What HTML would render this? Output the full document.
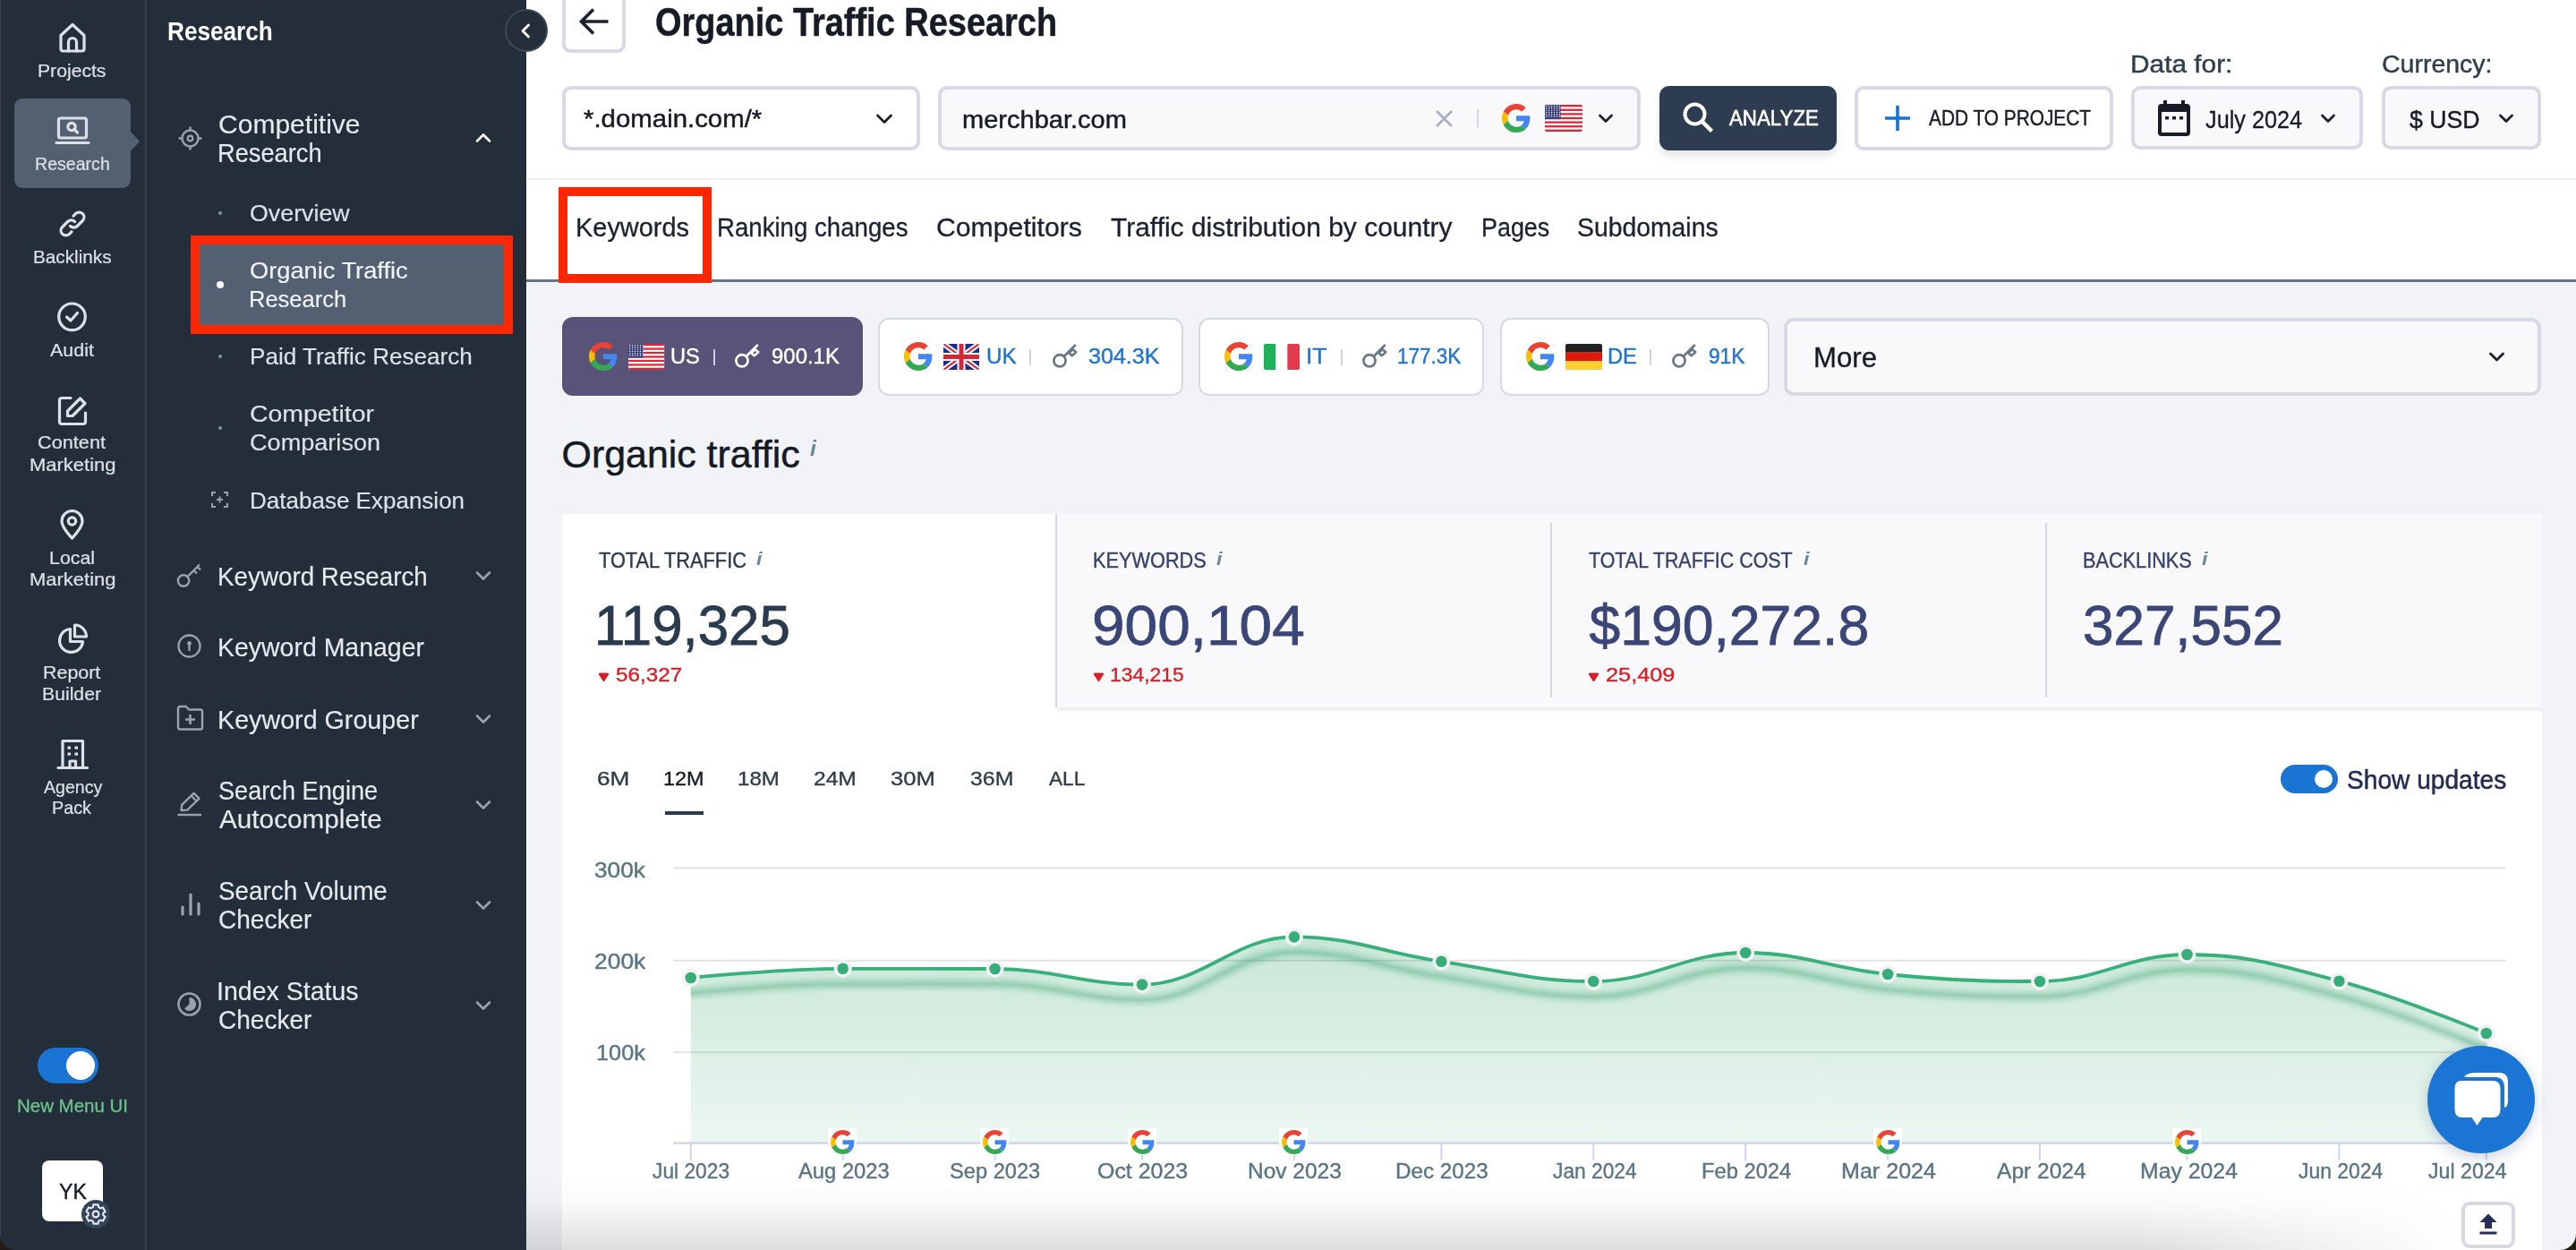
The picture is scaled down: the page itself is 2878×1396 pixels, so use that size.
<!DOCTYPE html><html><head><meta charset="utf-8"><title>Organic Traffic Research</title><style>*{margin:0;padding:0;box-sizing:content-box}
html,body{width:2878px;height:1396px;overflow:hidden;background:#242e3b}
body{position:relative;font-family:"Liberation Sans",sans-serif}
.t{position:absolute;white-space:nowrap;line-height:1;transform-origin:0 0}
svg{position:absolute}</style></head><body>
<div style="position:absolute;left:0px;top:0px;width:588px;height:1396px;background:#242e3b;"></div>
<div style="position:absolute;left:162px;top:0px;width:2px;height:1396px;background:#364251;"></div>
<div style="position:absolute;left:0px;top:0px;width:1px;height:1396px;background:#3a4553;"></div>
<div style="position:absolute;left:16px;top:110px;width:130px;height:100px;background:#526072;border-radius:9px;"></div>
<svg style="position:absolute;left:145px;top:146px;overflow:visible;" width="12" height="24" viewBox="0 0 12 24"><path d="M0 0 L11 12 L0 24 Z" fill="#526072"/></svg>
<div class="t" style="left:42.31px;top:68.52px;font-size:20.64px;color:#dde0e6;transform:scaleX(1.0259);-webkit-text-stroke:0.20px #dde0e6;">Projects</div>
<div class="t" style="left:38.93px;top:172.52px;font-size:20.64px;color:#dde0e6;transform:scaleX(0.9491);-webkit-text-stroke:0.20px #dde0e6;">Research</div>
<div class="t" style="left:36.74px;top:276.52px;font-size:20.64px;color:#dde0e6;transform:scaleX(1.0056);-webkit-text-stroke:0.20px #dde0e6;">Backlinks</div>
<div class="t" style="left:56.30px;top:380.52px;font-size:20.64px;color:#dde0e6;transform:scaleX(1.0394);-webkit-text-stroke:0.20px #dde0e6;">Audit</div>
<div class="t" style="left:42.41px;top:484.22px;font-size:20.64px;color:#dde0e6;transform:scaleX(1.0520);-webkit-text-stroke:0.20px #dde0e6;">Content</div>
<div class="t" style="left:32.84px;top:508.52px;font-size:20.64px;color:#dde0e6;transform:scaleX(1.0660);-webkit-text-stroke:0.20px #dde0e6;">Marketing</div>
<div class="t" style="left:55.29px;top:612.52px;font-size:20.64px;color:#dde0e6;transform:scaleX(1.0359);-webkit-text-stroke:0.20px #dde0e6;">Local</div>
<div class="t" style="left:32.54px;top:636.52px;font-size:20.64px;color:#dde0e6;transform:scaleX(1.0660);-webkit-text-stroke:0.20px #dde0e6;">Marketing</div>
<div class="t" style="left:48.28px;top:740.52px;font-size:20.64px;color:#dde0e6;transform:scaleX(1.0388);-webkit-text-stroke:0.20px #dde0e6;">Report</div>
<div class="t" style="left:47.30px;top:764.52px;font-size:20.64px;color:#dde0e6;transform:scaleX(1.0285);-webkit-text-stroke:0.20px #dde0e6;">Builder</div>
<div class="t" style="left:48.60px;top:869.02px;font-size:20.64px;color:#dde0e6;transform:scaleX(0.9501);-webkit-text-stroke:0.20px #dde0e6;">Agency</div>
<div class="t" style="left:58.42px;top:891.52px;font-size:20.64px;color:#dde0e6;transform:scaleX(0.9577);-webkit-text-stroke:0.20px #dde0e6;">Pack</div>
<svg style="position:absolute;left:66px;top:25px;overflow:visible;" width="30" height="34" viewBox="0 0 30 34"><path d="M2 14.5 L15 2.5 L28 14.5 V29.5 a2.5 2.5 0 0 1 -2.5 2.5 H4.5 a2.5 2.5 0 0 1 -2.5 -2.5 Z" fill="none" stroke="#dde0e6" stroke-width="3.2" stroke-linecap="round" stroke-linejoin="round"/><path d="M10.5 32 V22 a4.5 4.5 0 0 1 9 0 V32" fill="none" stroke="#dde0e6" stroke-width="3.2" stroke-linecap="round" stroke-linejoin="round"/></svg>
<svg style="position:absolute;left:62px;top:130px;overflow:visible;" width="38" height="32" viewBox="0 0 38 32"><rect x="3.5" y="2" width="31" height="22" rx="2" fill="none" stroke="#dde0e6" stroke-width="3.2" stroke-linecap="round" stroke-linejoin="round"/><circle cx="18" cy="11.5" r="4.2" fill="none" stroke="#dde0e6" stroke-width="3.2" stroke-linecap="round" stroke-linejoin="round" stroke-width="2.6"/><path d="M21 14.5 L24.5 18" fill="none" stroke="#dde0e6" stroke-width="3.2" stroke-linecap="round" stroke-linejoin="round" stroke-width="2.6"/><path d="M1 29.5 H37" fill="none" stroke="#dde0e6" stroke-width="3.2" stroke-linecap="round" stroke-linejoin="round" stroke-linecap="butt"/></svg>
<svg style="position:absolute;left:64px;top:233px;overflow:visible;" width="34" height="34" viewBox="0 0 34 34"><path d="M14.5 19.5 a5.5 5.5 0 0 0 7.8 0 l6 -6 a5.5 5.5 0 0 0 -7.8 -7.8 l-2.5 2.5" fill="none" stroke="#dde0e6" stroke-width="3.2" stroke-linecap="round" stroke-linejoin="round"/><path d="M19.5 14.5 a5.5 5.5 0 0 0 -7.8 0 l-6 6 a5.5 5.5 0 0 0 7.8 7.8 l2.5 -2.5" fill="none" stroke="#dde0e6" stroke-width="3.2" stroke-linecap="round" stroke-linejoin="round"/></svg>
<svg style="position:absolute;left:64px;top:337px;overflow:visible;" width="34" height="34" viewBox="0 0 34 34"><circle cx="16.5" cy="16.8" r="14.8" fill="none" stroke="#dde0e6" stroke-width="3.2" stroke-linecap="round" stroke-linejoin="round"/><path d="M10.5 17 L15 21 L22.5 12.5" fill="none" stroke="#dde0e6" stroke-width="3.2" stroke-linecap="round" stroke-linejoin="round"/></svg>
<svg style="position:absolute;left:64px;top:441px;overflow:visible;" width="34" height="35" viewBox="0 0 34 35"><path d="M15 3.5 H5 a2.5 2.5 0 0 0 -2.5 2.5 V30 a2.5 2.5 0 0 0 2.5 2.5 H29 a2.5 2.5 0 0 0 2.5 -2.5 V20" fill="none" stroke="#dde0e6" stroke-width="3.2" stroke-linecap="round" stroke-linejoin="round"/><path d="M25.5 4 L31 9.5 L17 23.5 H11.5 V18 Z" fill="none" stroke="#dde0e6" stroke-width="3.2" stroke-linecap="round" stroke-linejoin="round"/></svg>
<svg style="position:absolute;left:67px;top:569px;overflow:visible;" width="28" height="34" viewBox="0 0 28 34"><path d="M13.5 32 C13.5 32 2 20.5 2 13 a11.5 11.5 0 0 1 23 0 C25 20.5 13.5 32 13.5 32 Z" fill="none" stroke="#dde0e6" stroke-width="3.2" stroke-linecap="round" stroke-linejoin="round"/><circle cx="13.5" cy="13" r="4.2" fill="none" stroke="#dde0e6" stroke-width="3.2" stroke-linecap="round" stroke-linejoin="round"/></svg>
<svg style="position:absolute;left:64px;top:696px;overflow:visible;" width="35" height="36" viewBox="0 0 35 36"><path d="M14.5 6.5 a13 13 0 1 0 14 14 H14.5 Z" fill="none" stroke="#dde0e6" stroke-width="3.2" stroke-linecap="round" stroke-linejoin="round"/><path d="M19.5 2 a13 13 0 0 1 13 13 H19.5 Z" fill="none" stroke="#dde0e6" stroke-width="3.2" stroke-linecap="round" stroke-linejoin="round"/></svg>
<svg style="position:absolute;left:64px;top:825px;overflow:visible;" width="35" height="35" viewBox="0 0 35 35"><path d="M6 32.5 V2.5 H28.5 V32.5" fill="none" stroke="#dde0e6" stroke-width="3.2" stroke-linecap="round" stroke-linejoin="round"/><path d="M1 32.5 H33.5" fill="none" stroke="#dde0e6" stroke-width="3.2" stroke-linecap="round" stroke-linejoin="round"/><path d="M14 32.5 V25 H20.5 V32.5" fill="none" stroke="#dde0e6" stroke-width="3.2" stroke-linecap="round" stroke-linejoin="round"/><g fill="#dde0e6"><rect x="11.5" y="8.5" width="3.5" height="3.2"/><rect x="19.5" y="8.5" width="3.5" height="3.2"/><rect x="11.5" y="15.5" width="3.5" height="3.2"/><rect x="19.5" y="15.5" width="3.5" height="3.2"/></g></svg>
<div style="position:absolute;left:42px;top:1170px;width:68px;height:40px;background:#1a74d4;border-radius:20px;"></div>
<div style="position:absolute;left:74px;top:1174px;width:32px;height:32px;background:#fff;border-radius:50%;"></div>
<div class="t" style="left:19.36px;top:1224.77px;font-size:20.35px;color:#6cc28e;transform:scaleX(1.0054);-webkit-text-stroke:0.33px #6cc28e;">New Menu UI</div>
<div style="position:absolute;left:47px;top:1296px;width:68px;height:68px;background:#fff;border-radius:8px;"></div>
<div class="t" style="left:65.92px;top:1318.68px;font-size:24.71px;color:#171b26;transform:scaleX(0.9375);-webkit-text-stroke:0.40px #171b26;">YK</div>
<div style="position:absolute;left:91px;top:1340px;width:32px;height:32px;background:#33445a;border-radius:50%;"></div>
<svg style="position:absolute;left:94px;top:1343px;overflow:visible;" width="26" height="26" viewBox="0 0 26 26"><path d="M16.15 5.21 L15.66 2.33 L10.34 2.33 L9.85 5.21 L7.83 6.38 L5.09 5.36 L2.43 9.97 L4.68 11.83 L4.68 14.17 L2.43 16.03 L5.09 20.64 L7.83 19.62 L9.85 20.79 L10.34 23.67 L15.66 23.67 L16.15 20.79 L18.17 19.62 L20.91 20.64 L23.57 16.03 L21.32 14.17 L21.32 11.83 L23.57 9.97 L20.91 5.36 L18.17 6.38 Z" fill="none" stroke="#e6e8ee" stroke-width="2.1" stroke-linejoin="round"/><circle cx="13" cy="13" r="3.4" fill="none" stroke="#e6e8ee" stroke-width="2.1"/></svg>
<div class="t" style="left:187.30px;top:19.84px;font-size:29.36px;color:#ffffff;font-weight:700;transform:scaleX(0.8914);">Research</div>
<div class="t" style="left:243.80px;top:123.84px;font-size:29.36px;color:#e6e9ee;transform:scaleX(1.0228);-webkit-text-stroke:0.15px #e6e9ee;">Competitive</div>
<div class="t" style="left:243.12px;top:156.14px;font-size:29.36px;color:#e6e9ee;transform:scaleX(0.9283);-webkit-text-stroke:0.15px #e6e9ee;">Research</div>
<svg style="position:absolute;left:199px;top:141px;overflow:visible;" width="27" height="27" viewBox="0 0 27 27"><circle cx="13.5" cy="13.5" r="9" fill="none" stroke="#9aa2ac" stroke-width="2.4"/><circle cx="13.5" cy="13.5" r="2.8" fill="none" stroke="#9aa2ac" stroke-width="2.2"/><path d="M13.5 0.5 V4.5 M13.5 22.5 V26.5 M0.5 13.5 H4.5 M22.5 13.5 H26.5" stroke="#9aa2ac" stroke-width="2.4"/></svg>
<svg style="position:absolute;left:531px;top:147px;overflow:visible;" width="18" height="14" viewBox="0 0 18 14"><path d="M2 10.5 L9 3.5 L16 10.5" stroke="#ffffff" fill="none" stroke-width="2.6" stroke-linecap="round" stroke-linejoin="round"/></svg>
<div style="position:absolute;left:244px;top:236px;width:4px;height:4px;background:#7d949e;border-radius:50%;"></div>
<div class="t" style="left:279.49px;top:225.69px;font-size:25.87px;color:#dde1e8;transform:scaleX(1.0363);-webkit-text-stroke:0.15px #dde1e8;">Overview</div>
<div style="position:absolute;left:213px;top:263px;width:360px;height:110px;background:#ff2600;"></div>
<div style="position:absolute;left:223px;top:273px;width:340px;height:90px;background:#526072;"></div>
<div style="position:absolute;left:242px;top:314px;width:8px;height:8px;background:#fff;border-radius:50%;"></div>
<div class="t" style="left:278.77px;top:289.48px;font-size:26.60px;color:#f1f3f6;transform:scaleX(1.0244);-webkit-text-stroke:0.15px #f1f3f6;">Organic Traffic</div>
<div class="t" style="left:277.96px;top:320.88px;font-size:26.60px;color:#f1f3f6;transform:scaleX(0.9583);-webkit-text-stroke:0.15px #f1f3f6;">Research</div>
<div style="position:absolute;left:244px;top:396px;width:4px;height:4px;background:#7d949e;border-radius:50%;"></div>
<div class="t" style="left:279.41px;top:386.09px;font-size:25.87px;color:#dde1e8;transform:scaleX(1.0079);-webkit-text-stroke:0.15px #dde1e8;">Paid Traffic Research</div>
<div style="position:absolute;left:244px;top:476px;width:4px;height:4px;background:#7d949e;border-radius:50%;"></div>
<div class="t" style="left:278.58px;top:449.40px;font-size:26.45px;color:#dde1e8;transform:scaleX(1.0749);-webkit-text-stroke:0.15px #dde1e8;">Competitor</div>
<div class="t" style="left:278.64px;top:480.60px;font-size:26.45px;color:#dde1e8;transform:scaleX(1.0248);-webkit-text-stroke:0.15px #dde1e8;">Comparison</div>
<svg style="position:absolute;left:236px;top:549px;overflow:visible;" width="19" height="18" viewBox="0 0 19 18"><path d="M1 5 V1 H5 M14 1 H18 V5 M18 13 V17 H14 M5 17 H1 V13" fill="none" stroke="#9aa2ac" stroke-width="2"/><path d="M9.5 5.5 V12.5 M6 9 H13" stroke="#9aa2ac" stroke-width="2"/></svg>
<div class="t" style="left:278.52px;top:545.85px;font-size:26.16px;color:#dde1e8;transform:scaleX(0.9946);-webkit-text-stroke:0.15px #dde1e8;">Database Expansion</div>
<svg style="position:absolute;left:197px;top:626px;overflow:visible;" width="31" height="31" viewBox="0 0 31 31"><circle cx="8" cy="22.5" r="6.2" fill="none" stroke="#9aa2ac" stroke-width="2.4"/><path d="M12.5 18 L26 4.5 M19.5 11 L23 14.5 M23.5 7 L27 10.5" fill="none" stroke="#9aa2ac" stroke-width="2.4" stroke-linejoin="round"/></svg>
<div class="t" style="left:243.08px;top:628.74px;font-size:29.36px;color:#e6e9ee;transform:scaleX(0.9467);-webkit-text-stroke:0.15px #e6e9ee;">Keyword Research</div>
<svg style="position:absolute;left:531px;top:636px;overflow:visible;" width="18" height="14" viewBox="0 0 18 14"><path d="M2 3.5 L9 10.5 L16 3.5" stroke="#9aa2ac" fill="none" stroke-width="2.6" stroke-linecap="round" stroke-linejoin="round"/></svg>
<svg style="position:absolute;left:198px;top:708px;overflow:visible;" width="28" height="28" viewBox="0 0 28 28"><circle cx="13.5" cy="13.5" r="12" fill="none" stroke="#9aa2ac" stroke-width="2.4"/><circle cx="13.5" cy="10.5" r="2.4" fill="#9aa2ac"/><path d="M13.5 11 V18" stroke="#9aa2ac" stroke-width="2.4" stroke-linecap="round"/></svg>
<div class="t" style="left:242.72px;top:708.44px;font-size:29.36px;color:#e6e9ee;transform:scaleX(0.9695);-webkit-text-stroke:0.15px #e6e9ee;">Keyword Manager</div>
<svg style="position:absolute;left:197px;top:787px;overflow:visible;" width="31" height="30" viewBox="0 0 31 30"><path d="M2 4 a2 2 0 0 1 2 -2 H11 L14 5.5 H27 a2 2 0 0 1 2 2 V25.5 a2 2 0 0 1 -2 2 H4 a2 2 0 0 1 -2 -2 Z" fill="none" stroke="#9aa2ac" stroke-width="2.4" stroke-linejoin="round"/><path d="M15.5 11 V22 M10 16.5 H21" stroke="#9aa2ac" stroke-width="2.6"/></svg>
<div class="t" style="left:242.71px;top:788.64px;font-size:29.36px;color:#e6e9ee;transform:scaleX(0.9769);-webkit-text-stroke:0.15px #e6e9ee;">Keyword Grouper</div>
<svg style="position:absolute;left:531px;top:796px;overflow:visible;" width="18" height="14" viewBox="0 0 18 14"><path d="M2 3.5 L9 10.5 L16 3.5" stroke="#9aa2ac" fill="none" stroke-width="2.6" stroke-linecap="round" stroke-linejoin="round"/></svg>
<svg style="position:absolute;left:198px;top:884px;overflow:visible;" width="28" height="28" viewBox="0 0 28 28"><path d="M4.5 21 L5.2 14.8 L18.5 1.8 L24.5 7.8 L11.2 20.6 Z" fill="none" stroke="#9aa2ac" stroke-width="2.4" stroke-linejoin="round"/><path d="M15.6 4.8 L21.5 10.7" stroke="#9aa2ac" stroke-width="2.2"/><path d="M0.5 26 H27" stroke="#9aa2ac" stroke-width="2.4"/></svg>
<div class="t" style="left:243.78px;top:868.14px;font-size:29.36px;color:#e6e9ee;transform:scaleX(0.9249);-webkit-text-stroke:0.15px #e6e9ee;">Search Engine</div>
<div class="t" style="left:245.00px;top:900.14px;font-size:29.36px;color:#e6e9ee;transform:scaleX(1.0122);-webkit-text-stroke:0.15px #e6e9ee;">Autocomplete</div>
<svg style="position:absolute;left:531px;top:892px;overflow:visible;" width="18" height="14" viewBox="0 0 18 14"><path d="M2 3.5 L9 10.5 L16 3.5" stroke="#9aa2ac" fill="none" stroke-width="2.6" stroke-linecap="round" stroke-linejoin="round"/></svg>
<svg style="position:absolute;left:201px;top:997px;overflow:visible;" width="23" height="26" viewBox="0 0 23 26"><path d="M3 16 V24 M12 2 V24 M21 12 V24" stroke="#9aa2ac" stroke-width="3.2" stroke-linecap="round"/></svg>
<div class="t" style="left:243.75px;top:980.14px;font-size:29.36px;color:#e6e9ee;transform:scaleX(0.9485);-webkit-text-stroke:0.15px #e6e9ee;">Search Volume</div>
<div class="t" style="left:243.60px;top:1011.84px;font-size:29.36px;color:#e6e9ee;transform:scaleX(0.9552);-webkit-text-stroke:0.15px #e6e9ee;">Checker</div>
<svg style="position:absolute;left:531px;top:1004px;overflow:visible;" width="18" height="14" viewBox="0 0 18 14"><path d="M2 3.5 L9 10.5 L16 3.5" stroke="#9aa2ac" fill="none" stroke-width="2.6" stroke-linecap="round" stroke-linejoin="round"/></svg>
<svg style="position:absolute;left:198px;top:1108px;overflow:visible;" width="28" height="28" viewBox="0 0 28 28"><circle cx="13.5" cy="13.5" r="12" fill="none" stroke="#9aa2ac" stroke-width="2.6"/><path d="M13.5 6 A7.5 7.5 0 0 1 21 13.5 A7.5 7.5 0 0 1 8 18.5 L13.5 13.5 Z" fill="#9aa2ac"/></svg>
<div class="t" style="left:242.43px;top:1092.14px;font-size:29.36px;color:#e6e9ee;transform:scaleX(0.9713);-webkit-text-stroke:0.15px #e6e9ee;">Index Status</div>
<div class="t" style="left:243.60px;top:1123.74px;font-size:29.36px;color:#e6e9ee;transform:scaleX(0.9552);-webkit-text-stroke:0.15px #e6e9ee;">Checker</div>
<svg style="position:absolute;left:531px;top:1116px;overflow:visible;" width="18" height="14" viewBox="0 0 18 14"><path d="M2 3.5 L9 10.5 L16 3.5" stroke="#9aa2ac" fill="none" stroke-width="2.6" stroke-linecap="round" stroke-linejoin="round"/></svg>
<div style="position:absolute;left:588px;top:0px;width:2290px;height:1396px;background:#f2f3f7;"></div>
<div style="position:absolute;left:588px;top:0px;width:2290px;height:313px;background:#ffffff;"></div>
<div style="position:absolute;left:588px;top:199px;width:2290px;height:2px;background:#eef0f4;"></div>
<div style="position:absolute;left:588px;top:312px;width:2290px;height:2.5px;background:#687384;"></div>
<div style="position:absolute;left:628px;top:-14px;width:71px;height:73px;box-sizing:border-box;border:4px solid #d9d9e5;border-radius:9px;background:#fff;"></div>
<svg style="position:absolute;left:647px;top:7px;overflow:visible;" width="35" height="34" viewBox="0 0 35 34"><path d="M32.5 17 H3.5 M16 3.5 L2.5 17 L16 30.5" fill="none" stroke="#1c212c" stroke-width="3.6" stroke-linejoin="miter"/></svg>
<div class="t" style="left:731.98px;top:4.08px;font-size:43.60px;color:#161b26;font-weight:700;transform:scaleX(0.8703);-webkit-text-stroke:0.5px #161b26;">Organic Traffic Research</div>
<div style="position:absolute;left:628px;top:96px;width:400px;height:72px;box-sizing:border-box;border:4px solid #d9d9e5;border-radius:10px;background:#fff;"></div>
<div class="t" style="left:652.16px;top:119.19px;font-size:28.00px;color:#161b26;transform:scaleX(1.0497);-webkit-text-stroke:0.45px #161b26;">*.domain.com/*</div>
<svg style="position:absolute;left:978px;top:126px;overflow:visible;" width="20" height="14" viewBox="0 0 20 14"><path d="M2.5 3 L10 10.5 L17.5 3" fill="none" stroke="#1c212c" stroke-width="2.8" stroke-linecap="round" stroke-linejoin="round"/></svg>
<div style="position:absolute;left:1048px;top:96px;width:785px;height:72px;box-sizing:border-box;border:4px solid #d9d9e5;border-radius:10px;background:#f9f9fc;"></div>
<div class="t" style="left:1074.81px;top:119.69px;font-size:28.00px;color:#161b26;transform:scaleX(1.0369);-webkit-text-stroke:0.45px #161b26;">merchbar.com</div>
<svg style="position:absolute;left:1603px;top:122px;overflow:visible;" width="21" height="21" viewBox="0 0 21 21"><path d="M2 2 L19 19 M19 2 L2 19" stroke="#a9aec2" stroke-width="2.6"/></svg>
<div style="position:absolute;left:1650px;top:122px;width:2px;height:20px;background:#d5d7e0;"></div>
<svg style="position:absolute;left:1678px;top:116px;overflow:visible;" width="32" height="32" viewBox="0 0 48 48"><path fill="#EA4335" d="M24 9.5c3.54 0 6.71 1.22 9.21 3.6l6.85-6.85C35.9 2.38 30.47 0 24 0 14.62 0 6.51 5.38 2.56 13.22l7.98 6.19C12.43 13.72 17.74 9.5 24 9.5z"/><path fill="#4285F4" d="M46.98 24.55c0-1.57-.15-3.09-.38-4.55H24v9.02h12.94c-.58 2.96-2.26 5.48-4.78 7.18l7.73 6c4.51-4.18 7.09-10.36 7.09-17.65z"/><path fill="#FBBC05" d="M10.53 28.59c-.48-1.45-.76-2.99-.76-4.59s.27-3.14.76-4.59l-7.98-6.19C.92 16.46 0 20.12 0 24c0 3.88.92 7.54 2.56 10.78l7.970-6.19z"/><path fill="#34A853" d="M24 48c6.48 0 11.930-2.130 15.890-5.810l-7.730-6c-2.150 1.450-4.920 2.300-8.160 2.300-6.260 0-11.570-4.220-13.470-9.910l-7.980 6.190C6.510 42.620 14.620 48 24 48z"/></svg>
<svg style="position:absolute;left:1726px;top:117px;overflow:visible;" width="42" height="30" viewBox="0 0 42 30"><defs><clipPath id="cf1726"><rect width="42" height="30" rx="2"/></clipPath></defs><g clip-path="url(#cf1726)"><rect width="42" height="30" fill="#fff"/><rect x="0" y="0.000" width="42" height="2.308" fill="#d8283a"/><rect x="0" y="4.615" width="42" height="2.308" fill="#d8283a"/><rect x="0" y="9.231" width="42" height="2.308" fill="#d8283a"/><rect x="0" y="13.846" width="42" height="2.308" fill="#d8283a"/><rect x="0" y="18.462" width="42" height="2.308" fill="#d8283a"/><rect x="0" y="23.077" width="42" height="2.308" fill="#d8283a"/><rect x="0" y="27.692" width="42" height="2.308" fill="#d8283a"/><rect width="17.64" height="16.15" fill="#3b3f80"/><circle cx="1.80" cy="1.50" r="0.7" fill="#fff"/><circle cx="4.70" cy="1.50" r="0.7" fill="#fff"/><circle cx="7.60" cy="1.50" r="0.7" fill="#fff"/><circle cx="10.50" cy="1.50" r="0.7" fill="#fff"/><circle cx="13.40" cy="1.50" r="0.7" fill="#fff"/><circle cx="16.30" cy="1.50" r="0.7" fill="#fff"/><circle cx="1.80" cy="3.80" r="0.7" fill="#fff"/><circle cx="4.70" cy="3.80" r="0.7" fill="#fff"/><circle cx="7.60" cy="3.80" r="0.7" fill="#fff"/><circle cx="10.50" cy="3.80" r="0.7" fill="#fff"/><circle cx="13.40" cy="3.80" r="0.7" fill="#fff"/><circle cx="16.30" cy="3.80" r="0.7" fill="#fff"/><circle cx="1.80" cy="6.10" r="0.7" fill="#fff"/><circle cx="4.70" cy="6.10" r="0.7" fill="#fff"/><circle cx="7.60" cy="6.10" r="0.7" fill="#fff"/><circle cx="10.50" cy="6.10" r="0.7" fill="#fff"/><circle cx="13.40" cy="6.10" r="0.7" fill="#fff"/><circle cx="16.30" cy="6.10" r="0.7" fill="#fff"/><circle cx="1.80" cy="8.40" r="0.7" fill="#fff"/><circle cx="4.70" cy="8.40" r="0.7" fill="#fff"/><circle cx="7.60" cy="8.40" r="0.7" fill="#fff"/><circle cx="10.50" cy="8.40" r="0.7" fill="#fff"/><circle cx="13.40" cy="8.40" r="0.7" fill="#fff"/><circle cx="16.30" cy="8.40" r="0.7" fill="#fff"/><circle cx="1.80" cy="10.70" r="0.7" fill="#fff"/><circle cx="4.70" cy="10.70" r="0.7" fill="#fff"/><circle cx="7.60" cy="10.70" r="0.7" fill="#fff"/><circle cx="10.50" cy="10.70" r="0.7" fill="#fff"/><circle cx="13.40" cy="10.70" r="0.7" fill="#fff"/><circle cx="16.30" cy="10.70" r="0.7" fill="#fff"/><circle cx="1.80" cy="13.00" r="0.7" fill="#fff"/><circle cx="4.70" cy="13.00" r="0.7" fill="#fff"/><circle cx="7.60" cy="13.00" r="0.7" fill="#fff"/><circle cx="10.50" cy="13.00" r="0.7" fill="#fff"/><circle cx="13.40" cy="13.00" r="0.7" fill="#fff"/><circle cx="16.30" cy="13.00" r="0.7" fill="#fff"/></g></svg>
<svg style="position:absolute;left:1785px;top:126px;overflow:visible;" width="18" height="13" viewBox="0 0 18 13"><path d="M2.5 3 L9 9.5 L15.5 3" fill="none" stroke="#1c212c" stroke-width="2.8" stroke-linecap="round" stroke-linejoin="round"/></svg>
<div style="position:absolute;left:1854px;top:96px;width:198px;height:72px;background:#2d3c50;border-radius:11px;box-shadow:0 6px 10px rgba(40,50,70,0.13);"></div>
<svg style="position:absolute;left:1879px;top:113px;overflow:visible;" width="36" height="37" viewBox="0 0 36 37"><circle cx="14.5" cy="14.5" r="11" fill="none" stroke="#fff" stroke-width="4"/><path d="M22.5 22.5 L33.5 33.5" stroke="#fff" stroke-width="4.5"/></svg>
<div class="t" style="left:1932.00px;top:121.21px;font-size:23.26px;color:#ffffff;transform:scaleX(0.9588);-webkit-text-stroke:0.6px #fff;">ANALYZE</div>
<div style="position:absolute;left:2072px;top:96px;width:289px;height:72px;box-sizing:border-box;border:4px solid #d9d9e5;border-radius:10px;background:#fff;"></div>
<svg style="position:absolute;left:2105px;top:117px;overflow:visible;" width="30" height="30" viewBox="0 0 30 30"><path d="M15 1 V29 M1 15 H29" stroke="#1a73d2" stroke-width="3.6"/></svg>
<div class="t" style="left:2155.00px;top:121.31px;font-size:23.26px;color:#161b26;transform:scaleX(0.8962);-webkit-text-stroke:0.4px #161b26;">ADD TO PROJECT</div>
<div class="t" style="left:2380.11px;top:58.42px;font-size:27.62px;color:#2e3f49;transform:scaleX(1.0804);-webkit-text-stroke:0.44px #2e3f49;">Data for:</div>
<div style="position:absolute;left:2381px;top:96px;width:259px;height:71px;box-sizing:border-box;border:4px solid #d9d9e5;border-radius:10px;background:#f9f9fc;"></div>
<svg style="position:absolute;left:2411px;top:112px;overflow:visible;" width="36" height="40" viewBox="0 0 36 40"><rect x="0" y="4" width="36" height="36" rx="4" fill="#181c27"/><rect x="4" y="13" width="28" height="23" fill="#f9f9fc"/><rect x="6" y="0" width="4" height="7" fill="#181c27"/><rect x="26" y="0" width="4" height="7" fill="#181c27"/><rect x="8" y="18" width="4" height="3.5" fill="#181c27"/><rect x="16" y="18" width="4" height="3.5" fill="#181c27"/><rect x="24" y="18" width="4" height="3.5" fill="#181c27"/></svg>
<div class="t" style="left:2463.62px;top:119.62px;font-size:27.62px;color:#161b26;transform:scaleX(0.9149);-webkit-text-stroke:0.3px #161b26;">July 2024</div>
<svg style="position:absolute;left:2592px;top:126px;overflow:visible;" width="18" height="13" viewBox="0 0 18 13"><path d="M2.5 3 L9 9.5 L15.5 3" fill="none" stroke="#1c212c" stroke-width="2.8" stroke-linecap="round" stroke-linejoin="round"/></svg>
<div class="t" style="left:2661.18px;top:58.42px;font-size:27.62px;color:#2e3f49;transform:scaleX(1.0319);-webkit-text-stroke:0.44px #2e3f49;">Currency:</div>
<div style="position:absolute;left:2661px;top:96px;width:178px;height:71px;box-sizing:border-box;border:4px solid #d9d9e5;border-radius:10px;background:#f9f9fc;"></div>
<div class="t" style="left:2691.53px;top:119.00px;font-size:28.34px;color:#161b26;transform:scaleX(0.9425);-webkit-text-stroke:0.4px #161b26;">$ USD</div>
<svg style="position:absolute;left:2791px;top:126px;overflow:visible;" width="18" height="13" viewBox="0 0 18 13"><path d="M2.5 3 L9 9.5 L15.5 3" fill="none" stroke="#1c212c" stroke-width="2.8" stroke-linecap="round" stroke-linejoin="round"/></svg>
<div class="t" style="left:643.29px;top:240.39px;font-size:29.07px;color:#1b2130;transform:scaleX(0.9954);-webkit-text-stroke:0.3px #1b2130;">Keywords</div>
<div class="t" style="left:800.79px;top:240.39px;font-size:29.07px;color:#1b2130;transform:scaleX(0.9505);-webkit-text-stroke:0.3px #1b2130;">Ranking changes</div>
<div class="t" style="left:1046.39px;top:240.39px;font-size:29.07px;color:#1b2130;transform:scaleX(1.0395);-webkit-text-stroke:0.3px #1b2130;">Competitors</div>
<div class="t" style="left:1241.40px;top:240.39px;font-size:29.07px;color:#1b2130;transform:scaleX(1.0312);-webkit-text-stroke:0.3px #1b2130;">Traffic distribution by country</div>
<div class="t" style="left:1654.65px;top:240.39px;font-size:29.07px;color:#1b2130;transform:scaleX(0.9258);-webkit-text-stroke:0.3px #1b2130;">Pages</div>
<div class="t" style="left:1762.32px;top:240.39px;font-size:29.07px;color:#1b2130;transform:scaleX(0.9755);-webkit-text-stroke:0.3px #1b2130;">Subdomains</div>
<div style="position:absolute;left:624px;top:209px;width:171px;height:107px;box-sizing:border-box;border:10px solid #ff2600;"></div>
<div style="position:absolute;left:564px;top:10px;width:48px;height:48px;box-sizing:border-box;background:#242e3b;border:2px solid #3c4757;border-radius:50%;"></div>
<svg style="position:absolute;left:581px;top:26px;overflow:visible;" width="12" height="17" viewBox="0 0 12 17"><path d="M9.5 2 L3 8.5 L9.5 15" fill="none" stroke="#fff" stroke-width="2.8" stroke-linecap="round" stroke-linejoin="round"/></svg>
<div style="position:absolute;left:628px;top:354px;width:336px;height:88px;background:#5a5379;border-radius:12px;"></div>
<svg style="position:absolute;left:658px;top:382px;overflow:visible;" width="32" height="32" viewBox="0 0 48 48"><path fill="#EA4335" d="M24 9.5c3.54 0 6.71 1.22 9.21 3.6l6.85-6.85C35.9 2.38 30.47 0 24 0 14.62 0 6.51 5.38 2.56 13.22l7.98 6.19C12.43 13.72 17.74 9.5 24 9.5z"/><path fill="#4285F4" d="M46.98 24.55c0-1.57-.15-3.09-.38-4.55H24v9.02h12.94c-.58 2.96-2.26 5.48-4.78 7.18l7.73 6c4.51-4.18 7.09-10.36 7.09-17.65z"/><path fill="#FBBC05" d="M10.53 28.59c-.48-1.45-.76-2.99-.76-4.59s.27-3.14.76-4.59l-7.98-6.19C.92 16.46 0 20.12 0 24c0 3.88.92 7.54 2.56 10.78l7.970-6.19z"/><path fill="#34A853" d="M24 48c6.48 0 11.930-2.130 15.890-5.810l-7.730-6c-2.150 1.450-4.920 2.300-8.160 2.300-6.260 0-11.570-4.220-13.470-9.910l-7.980 6.190C6.510 42.620 14.620 48 24 48z"/></svg>
<svg style="position:absolute;left:701.6px;top:384px;overflow:visible;" width="40.4" height="29" viewBox="0 0 40.4 29"><defs><clipPath id="cf701.6"><rect width="40.4" height="29" rx="2"/></clipPath></defs><g clip-path="url(#cf701.6)"><rect width="40.4" height="29" fill="#fff"/><rect x="0" y="0.000" width="40.4" height="2.231" fill="#d8283a"/><rect x="0" y="4.462" width="40.4" height="2.231" fill="#d8283a"/><rect x="0" y="8.923" width="40.4" height="2.231" fill="#d8283a"/><rect x="0" y="13.385" width="40.4" height="2.231" fill="#d8283a"/><rect x="0" y="17.846" width="40.4" height="2.231" fill="#d8283a"/><rect x="0" y="22.308" width="40.4" height="2.231" fill="#d8283a"/><rect x="0" y="26.769" width="40.4" height="2.231" fill="#d8283a"/><rect width="16.97" height="15.62" fill="#3b3f80"/><circle cx="1.80" cy="1.50" r="0.7" fill="#fff"/><circle cx="4.70" cy="1.50" r="0.7" fill="#fff"/><circle cx="7.60" cy="1.50" r="0.7" fill="#fff"/><circle cx="10.50" cy="1.50" r="0.7" fill="#fff"/><circle cx="13.40" cy="1.50" r="0.7" fill="#fff"/><circle cx="16.30" cy="1.50" r="0.7" fill="#fff"/><circle cx="1.80" cy="3.80" r="0.7" fill="#fff"/><circle cx="4.70" cy="3.80" r="0.7" fill="#fff"/><circle cx="7.60" cy="3.80" r="0.7" fill="#fff"/><circle cx="10.50" cy="3.80" r="0.7" fill="#fff"/><circle cx="13.40" cy="3.80" r="0.7" fill="#fff"/><circle cx="16.30" cy="3.80" r="0.7" fill="#fff"/><circle cx="1.80" cy="6.10" r="0.7" fill="#fff"/><circle cx="4.70" cy="6.10" r="0.7" fill="#fff"/><circle cx="7.60" cy="6.10" r="0.7" fill="#fff"/><circle cx="10.50" cy="6.10" r="0.7" fill="#fff"/><circle cx="13.40" cy="6.10" r="0.7" fill="#fff"/><circle cx="16.30" cy="6.10" r="0.7" fill="#fff"/><circle cx="1.80" cy="8.40" r="0.7" fill="#fff"/><circle cx="4.70" cy="8.40" r="0.7" fill="#fff"/><circle cx="7.60" cy="8.40" r="0.7" fill="#fff"/><circle cx="10.50" cy="8.40" r="0.7" fill="#fff"/><circle cx="13.40" cy="8.40" r="0.7" fill="#fff"/><circle cx="16.30" cy="8.40" r="0.7" fill="#fff"/><circle cx="1.80" cy="10.70" r="0.7" fill="#fff"/><circle cx="4.70" cy="10.70" r="0.7" fill="#fff"/><circle cx="7.60" cy="10.70" r="0.7" fill="#fff"/><circle cx="10.50" cy="10.70" r="0.7" fill="#fff"/><circle cx="13.40" cy="10.70" r="0.7" fill="#fff"/><circle cx="16.30" cy="10.70" r="0.7" fill="#fff"/><circle cx="1.80" cy="13.00" r="0.7" fill="#fff"/><circle cx="4.70" cy="13.00" r="0.7" fill="#fff"/><circle cx="7.60" cy="13.00" r="0.7" fill="#fff"/><circle cx="10.50" cy="13.00" r="0.7" fill="#fff"/><circle cx="13.40" cy="13.00" r="0.7" fill="#fff"/><circle cx="16.30" cy="13.00" r="0.7" fill="#fff"/></g></svg>
<div class="t" style="left:749.03px;top:385.58px;font-size:24.71px;color:#ffffff;transform:scaleX(0.9566);-webkit-text-stroke:0.40px #ffffff;">US</div>
<div style="position:absolute;left:796.5px;top:390px;width:2px;height:18px;background:#cfcbe0;"></div>
<svg style="position:absolute;left:820px;top:383.5px;overflow:visible;" width="29" height="27" viewBox="0 0 29 27"><circle cx="9" cy="18.8" r="6.6" fill="none" stroke="#ffffff" stroke-width="2.7"/><path d="M13.8 14 L26 1.8" fill="none" stroke="#ffffff" stroke-width="2.7" stroke-linecap="round"/><path d="M23.6 6.2 L27.3 9.2 L22.6 13.3 L19.4 10.4 Z" fill="none" stroke="#ffffff" stroke-width="2.5" stroke-linejoin="round"/></svg>
<div class="t" style="left:861.52px;top:385.58px;font-size:24.71px;color:#ffffff;transform:scaleX(0.9692);-webkit-text-stroke:0.40px #ffffff;">900.1K</div>
<div style="position:absolute;left:980.5px;top:354.5px;width:341.5px;height:87px;box-sizing:border-box;border:2px solid #d9d9e5;border-radius:12px;background:#fff;"></div>
<svg style="position:absolute;left:1010px;top:382px;overflow:visible;" width="32" height="32" viewBox="0 0 48 48"><path fill="#EA4335" d="M24 9.5c3.54 0 6.71 1.22 9.21 3.6l6.85-6.85C35.9 2.38 30.47 0 24 0 14.62 0 6.51 5.38 2.56 13.22l7.98 6.19C12.43 13.72 17.74 9.5 24 9.5z"/><path fill="#4285F4" d="M46.98 24.55c0-1.57-.15-3.09-.38-4.55H24v9.02h12.94c-.58 2.96-2.26 5.48-4.78 7.18l7.73 6c4.51-4.18 7.09-10.36 7.09-17.65z"/><path fill="#FBBC05" d="M10.53 28.59c-.48-1.45-.76-2.99-.76-4.59s.27-3.14.76-4.59l-7.98-6.19C.92 16.46 0 20.12 0 24c0 3.88.92 7.54 2.56 10.78l7.970-6.19z"/><path fill="#34A853" d="M24 48c6.48 0 11.930-2.130 15.890-5.810l-7.730-6c-2.150 1.450-4.920 2.300-8.160 2.300-6.260 0-11.570-4.220-13.470-9.910l-7.980 6.190C6.510 42.620 14.620 48 24 48z"/></svg>
<svg style="position:absolute;left:1053.8px;top:384px;overflow:visible;" width="40" height="29" viewBox="0 0 40 29"><defs><clipPath id="ukc"><rect width="40" height="29" rx="2"/></clipPath></defs><g clip-path="url(#ukc)"><rect width="40" height="29" fill="#1f2c8c"/><path d="M0 0 L40 29 M40 0 L0 29" stroke="#fff" stroke-width="6"/><path d="M0 0 L40 29 M40 0 L0 29" stroke="#d3283a" stroke-width="2.2"/><path d="M20 0 V29 M0 14.5 H40" stroke="#fff" stroke-width="9"/><path d="M20 0 V29 M0 14.5 H40" stroke="#d3283a" stroke-width="5"/></g></svg>
<div class="t" style="left:1101.68px;top:385.58px;font-size:24.71px;color:#1f73d1;transform:scaleX(0.9806);-webkit-text-stroke:0.40px #1f73d1;">UK</div>
<div style="position:absolute;left:1150px;top:390px;width:2px;height:18px;background:#d0d3dc;"></div>
<svg style="position:absolute;left:1174.5px;top:383.5px;overflow:visible;" width="29" height="27" viewBox="0 0 29 27"><circle cx="9" cy="18.8" r="6.6" fill="none" stroke="#697884" stroke-width="2.7"/><path d="M13.8 14 L26 1.8" fill="none" stroke="#697884" stroke-width="2.7" stroke-linecap="round"/><path d="M23.6 6.2 L27.3 9.2 L22.6 13.3 L19.4 10.4 Z" fill="none" stroke="#697884" stroke-width="2.5" stroke-linejoin="round"/></svg>
<div class="t" style="left:1215.70px;top:385.58px;font-size:24.71px;color:#1f73d1;transform:scaleX(1.0157);-webkit-text-stroke:0.40px #1f73d1;">304.3K</div>
<div style="position:absolute;left:1338.6px;top:354.5px;width:319.9000000000001px;height:87px;box-sizing:border-box;border:2px solid #d9d9e5;border-radius:12px;background:#fff;"></div>
<svg style="position:absolute;left:1368px;top:382px;overflow:visible;" width="32" height="32" viewBox="0 0 48 48"><path fill="#EA4335" d="M24 9.5c3.54 0 6.71 1.22 9.21 3.6l6.85-6.85C35.9 2.38 30.47 0 24 0 14.62 0 6.51 5.38 2.56 13.22l7.98 6.19C12.43 13.72 17.74 9.5 24 9.5z"/><path fill="#4285F4" d="M46.98 24.55c0-1.57-.15-3.09-.38-4.55H24v9.02h12.94c-.58 2.96-2.26 5.48-4.78 7.18l7.73 6c4.51-4.18 7.09-10.36 7.09-17.65z"/><path fill="#FBBC05" d="M10.53 28.59c-.48-1.45-.76-2.99-.76-4.59s.27-3.14.76-4.59l-7.98-6.19C.92 16.46 0 20.12 0 24c0 3.88.92 7.54 2.56 10.78l7.970-6.19z"/><path fill="#34A853" d="M24 48c6.48 0 11.930-2.130 15.890-5.810l-7.730-6c-2.150 1.450-4.920 2.300-8.160 2.300-6.260 0-11.570-4.220-13.470-9.910l-7.980 6.190C6.510 42.620 14.620 48 24 48z"/></svg>
<svg style="position:absolute;left:1412px;top:384px;overflow:visible;" width="40" height="29" viewBox="0 0 40 29"><rect width="13.4" height="29" rx="2" fill="#1db15a"/><rect x="11" width="2.4" height="29" fill="#1db15a"/><rect x="13.3" width="13.4" height="29" fill="#fff"/><rect x="26.6" width="13.4" height="29" rx="2" fill="#e23b4e"/><rect x="26.6" width="2.4" height="29" fill="#e23b4e"/></svg>
<div class="t" style="left:1458.91px;top:385.58px;font-size:24.71px;color:#1f73d1;transform:scaleX(1.0740);-webkit-text-stroke:0.40px #1f73d1;">IT</div>
<div style="position:absolute;left:1497.5px;top:390px;width:2px;height:18px;background:#d0d3dc;"></div>
<svg style="position:absolute;left:1520.5px;top:383.5px;overflow:visible;" width="29" height="27" viewBox="0 0 29 27"><circle cx="9" cy="18.8" r="6.6" fill="none" stroke="#697884" stroke-width="2.7"/><path d="M13.8 14 L26 1.8" fill="none" stroke="#697884" stroke-width="2.7" stroke-linecap="round"/><path d="M23.6 6.2 L27.3 9.2 L22.6 13.3 L19.4 10.4 Z" fill="none" stroke="#697884" stroke-width="2.5" stroke-linejoin="round"/></svg>
<div class="t" style="left:1561.11px;top:385.58px;font-size:24.71px;color:#1f73d1;transform:scaleX(0.9104);-webkit-text-stroke:0.40px #1f73d1;">177.3K</div>
<div style="position:absolute;left:1676px;top:354.5px;width:300.5px;height:87px;box-sizing:border-box;border:2px solid #d9d9e5;border-radius:12px;background:#fff;"></div>
<svg style="position:absolute;left:1705px;top:382px;overflow:visible;" width="32" height="32" viewBox="0 0 48 48"><path fill="#EA4335" d="M24 9.5c3.54 0 6.71 1.22 9.21 3.6l6.85-6.85C35.9 2.38 30.47 0 24 0 14.62 0 6.51 5.38 2.56 13.22l7.98 6.19C12.43 13.72 17.74 9.5 24 9.5z"/><path fill="#4285F4" d="M46.98 24.55c0-1.57-.15-3.09-.38-4.55H24v9.02h12.94c-.58 2.96-2.26 5.48-4.78 7.18l7.73 6c4.51-4.18 7.09-10.36 7.09-17.65z"/><path fill="#FBBC05" d="M10.53 28.59c-.48-1.45-.76-2.99-.76-4.59s.27-3.14.76-4.59l-7.98-6.19C.92 16.46 0 20.12 0 24c0 3.88.92 7.54 2.56 10.78l7.970-6.19z"/><path fill="#34A853" d="M24 48c6.48 0 11.930-2.130 15.890-5.810l-7.730-6c-2.150 1.450-4.920 2.300-8.160 2.300-6.260 0-11.570-4.220-13.470-9.910l-7.980 6.190C6.510 42.620 14.620 48 24 48z"/></svg>
<svg style="position:absolute;left:1748.7px;top:384px;overflow:visible;" width="41" height="29" viewBox="0 0 41 29"><defs><clipPath id="dec"><rect width="41" height="29" rx="2"/></clipPath></defs><g clip-path="url(#dec)"><rect width="41" height="9.7" fill="#222"/><rect y="9.6" width="41" height="9.8" fill="#e3170a"/><rect y="19.3" width="41" height="9.7" fill="#fdd12f"/></g></svg>
<div class="t" style="left:1796.10px;top:385.58px;font-size:24.71px;color:#1f73d1;transform:scaleX(0.9598);-webkit-text-stroke:0.40px #1f73d1;">DE</div>
<div style="position:absolute;left:1843px;top:390px;width:2px;height:18px;background:#d0d3dc;"></div>
<svg style="position:absolute;left:1866.5px;top:383.5px;overflow:visible;" width="29" height="27" viewBox="0 0 29 27"><circle cx="9" cy="18.8" r="6.6" fill="none" stroke="#697884" stroke-width="2.7"/><path d="M13.8 14 L26 1.8" fill="none" stroke="#697884" stroke-width="2.7" stroke-linecap="round"/><path d="M23.6 6.2 L27.3 9.2 L22.6 13.3 L19.4 10.4 Z" fill="none" stroke="#697884" stroke-width="2.5" stroke-linejoin="round"/></svg>
<div class="t" style="left:1908.98px;top:385.58px;font-size:24.71px;color:#1f73d1;transform:scaleX(0.9176);-webkit-text-stroke:0.40px #1f73d1;">91K</div>
<div style="position:absolute;left:1993px;top:354.5px;width:846px;height:87px;box-sizing:border-box;border:4px solid #d9d9e5;border-radius:11px;background:#f9f9fc;"></div>
<div class="t" style="left:2025.51px;top:383.66px;font-size:30.52px;color:#161b26;transform:scaleX(1.0210);-webkit-text-stroke:0.3px #161b26;">More</div>
<svg style="position:absolute;left:2780px;top:392px;overflow:visible;" width="19" height="13" viewBox="0 0 19 13"><path d="M2.5 3 L9.5 10 L16.5 3" fill="none" stroke="#1c212c" stroke-width="2.8" stroke-linecap="round" stroke-linejoin="round"/></svg>
<div class="t" style="left:627.57px;top:485.70px;font-size:42.88px;color:#151a24;-webkit-text-stroke:0.50px #151a24;">Organic traffic</div>
<div class="t" style="left:904.62px;top:489.91px;font-size:23.26px;color:#6a8999;font-weight:700;font-style:italic;transform:scaleX(1.0750);">i</div>
<div style="position:absolute;left:628px;top:574px;width:2212px;height:822px;background:#ffffff;"></div>
<div style="position:absolute;left:1181px;top:574px;width:1659px;height:216px;background:#f9f9fc;"></div>
<div style="position:absolute;left:1181px;top:789.5px;width:1659px;height:4.5px;background:#eff0f4;"></div>
<div style="position:absolute;left:1179px;top:574px;width:2px;height:216px;background:#d8d8e4;"></div>
<div style="position:absolute;left:1732px;top:584px;width:2px;height:195px;background:#d8d8e4;"></div>
<div style="position:absolute;left:2285px;top:584px;width:2px;height:195px;background:#d8d8e4;"></div>
<div class="t" style="left:668.56px;top:615.31px;font-size:23.26px;color:#293948;transform:scaleX(0.9366);-webkit-text-stroke:0.37px #293948;">TOTAL TRAFFIC</div>
<div class="t" style="left:844.65px;top:613.77px;font-size:20.35px;color:#6a8999;font-weight:700;font-style:italic;transform:scaleX(1.1408);">i</div>
<div class="t" style="left:664.36px;top:667.08px;font-size:62.50px;color:#2b3b4f;transform:scaleX(0.9890);-webkit-text-stroke:0.8px #2b3b4f;">119,325</div>
<svg style="position:absolute;left:668px;top:750.5px;overflow:visible;" width="13" height="11" viewBox="0 0 13 11"><path d="M2.2 0.6 H10.8 Q12.8 0.8 11.9 2.6 L7.4 9.6 Q6.5 10.9 5.6 9.6 L1.1 2.6 Q0.2 0.8 2.2 0.6 Z" fill="#d81f26"/></svg>
<div class="t" style="left:687.73px;top:742.18px;font-size:22.82px;color:#d81f26;transform:scaleX(1.0623);-webkit-text-stroke:0.37px #d81f26;">56,327</div>
<div class="t" style="left:1220.66px;top:615.31px;font-size:23.26px;color:#34426e;transform:scaleX(0.9346);-webkit-text-stroke:0.37px #34426e;">KEYWORDS</div>
<div class="t" style="left:1358.65px;top:613.77px;font-size:20.35px;color:#6a8999;font-weight:700;font-style:italic;transform:scaleX(1.1408);">i</div>
<div class="t" style="left:1220.04px;top:667.08px;font-size:62.50px;color:#3a4677;transform:scaleX(1.0522);-webkit-text-stroke:0.8px #3a4677;">900,104</div>
<svg style="position:absolute;left:1220.8px;top:750.5px;overflow:visible;" width="13" height="11" viewBox="0 0 13 11"><path d="M2.2 0.6 H10.8 Q12.8 0.8 11.9 2.6 L7.4 9.6 Q6.5 10.9 5.6 9.6 L1.1 2.6 Q0.2 0.8 2.2 0.6 Z" fill="#d81f26"/></svg>
<div class="t" style="left:1240.08px;top:742.18px;font-size:22.82px;color:#d81f26;transform:scaleX(1.0041);-webkit-text-stroke:0.37px #d81f26;">134,215</div>
<div class="t" style="left:1774.97px;top:615.31px;font-size:23.26px;color:#34426e;transform:scaleX(0.9213);-webkit-text-stroke:0.37px #34426e;">TOTAL TRAFFIC COST</div>
<div class="t" style="left:2015.45px;top:613.77px;font-size:20.35px;color:#6a8999;font-weight:700;font-style:italic;transform:scaleX(1.1408);">i</div>
<div class="t" style="left:1775.38px;top:667.08px;font-size:62.50px;color:#3a4677;-webkit-text-stroke:0.8px #3a4677;">$190,272.8</div>
<svg style="position:absolute;left:1774px;top:750.5px;overflow:visible;" width="13" height="11" viewBox="0 0 13 11"><path d="M2.2 0.6 H10.8 Q12.8 0.8 11.9 2.6 L7.4 9.6 Q6.5 10.9 5.6 9.6 L1.1 2.6 Q0.2 0.8 2.2 0.6 Z" fill="#d81f26"/></svg>
<div class="t" style="left:1793.74px;top:742.18px;font-size:22.82px;color:#d81f26;transform:scaleX(1.1085);-webkit-text-stroke:0.37px #d81f26;">25,409</div>
<div class="t" style="left:2326.76px;top:615.31px;font-size:23.26px;color:#34426e;transform:scaleX(0.9329);-webkit-text-stroke:0.37px #34426e;">BACKLINKS</div>
<div class="t" style="left:2460.35px;top:613.77px;font-size:20.35px;color:#6a8999;font-weight:700;font-style:italic;transform:scaleX(1.1408);">i</div>
<div class="t" style="left:2326.52px;top:667.08px;font-size:62.50px;color:#3a4677;transform:scaleX(0.9909);-webkit-text-stroke:0.8px #3a4677;">327,552</div>
<div class="t" style="left:667.09px;top:858.99px;font-size:22.09px;color:#2e3d47;transform:scaleX(1.1866);-webkit-text-stroke:0.35px #2e3d47;">6M</div>
<div class="t" style="left:740.74px;top:858.99px;font-size:22.09px;color:#141920;transform:scaleX(1.0625);-webkit-text-stroke:0.35px #141920;">12M</div>
<div class="t" style="left:823.89px;top:858.99px;font-size:22.09px;color:#2e3d47;transform:scaleX(1.0904);-webkit-text-stroke:0.35px #2e3d47;">18M</div>
<div class="t" style="left:908.77px;top:858.99px;font-size:22.09px;color:#2e3d47;transform:scaleX(1.1128);-webkit-text-stroke:0.35px #2e3d47;">24M</div>
<div class="t" style="left:995.38px;top:858.99px;font-size:22.09px;color:#2e3d47;transform:scaleX(1.1589);-webkit-text-stroke:0.35px #2e3d47;">30M</div>
<div class="t" style="left:1084.00px;top:858.99px;font-size:22.09px;color:#2e3d47;transform:scaleX(1.1266);-webkit-text-stroke:0.35px #2e3d47;">36M</div>
<div class="t" style="left:1172.30px;top:858.99px;font-size:22.09px;color:#2e3d47;transform:scaleX(1.0242);-webkit-text-stroke:0.35px #2e3d47;">ALL</div>
<div style="position:absolute;left:743px;top:906px;width:43px;height:4px;background:#2b3a4d;"></div>
<div style="position:absolute;left:2548px;top:854px;width:64px;height:32px;background:#1a74d4;border-radius:16px;"></div>
<div style="position:absolute;left:2586px;top:860px;width:20px;height:20px;background:#fff;border-radius:50%;"></div>
<div class="t" style="left:2621.73px;top:855.77px;font-size:29.80px;color:#212a50;transform:scaleX(0.9436);-webkit-text-stroke:0.48px #212a50;">Show updates</div>
<svg style="position:absolute;left:0px;top:0px;overflow:visible;" width="2878" height="1396" viewBox="0 0 2878 1396"><defs>
<linearGradient id="ag" x1="0" y1="1040" x2="0" y2="1277" gradientUnits="userSpaceOnUse"><stop offset="0" stop-color="#c7e6d6"/><stop offset="1" stop-color="#ecf7f2"/></linearGradient>
</defs>
<path d="M771.80 1092.00 C771.80 1092.00 873.74 1081.80 941.71 1081.80 C1009.67 1081.80 1043.65 1081.80 1111.61 1082.00 C1177.38 1082.20 1210.27 1099.60 1276.04 1099.60 C1344.00 1099.60 1377.98 1046.40 1445.95 1046.40 C1511.72 1046.40 1544.60 1064.04 1610.37 1073.80 C1678.34 1083.88 1712.32 1096.00 1780.28 1096.00 C1848.24 1096.00 1882.23 1064.00 1950.19 1064.00 C2013.77 1064.00 2045.56 1081.81 2109.13 1088.00 C2177.10 1094.61 2211.08 1096.00 2279.04 1096.00 C2344.81 1096.00 2377.70 1066.00 2443.47 1066.00 C2511.43 1066.00 2545.41 1077.81 2613.37 1095.70 C2679.14 1113.01 2777.80 1154.00 2777.80 1154.00 L2777.80 1276.6 L771.80 1276.6 Z" fill="url(#ag)"/>
<rect x="752" y="968.3" width="2048" height="2" fill="#000" fill-opacity="0.105"/><rect x="752" y="1071.8" width="2048" height="2" fill="#000" fill-opacity="0.105"/><rect x="752" y="1174.2" width="2048" height="2" fill="#000" fill-opacity="0.105"/>
<path d="M771.80 1092.00 C771.80 1092.00 873.74 1081.80 941.71 1081.80 C1009.67 1081.80 1043.65 1081.80 1111.61 1082.00 C1177.38 1082.20 1210.27 1099.60 1276.04 1099.60 C1344.00 1099.60 1377.98 1046.40 1445.95 1046.40 C1511.72 1046.40 1544.60 1064.04 1610.37 1073.80 C1678.34 1083.88 1712.32 1096.00 1780.28 1096.00 C1848.24 1096.00 1882.23 1064.00 1950.19 1064.00 C2013.77 1064.00 2045.56 1081.81 2109.13 1088.00 C2177.10 1094.61 2211.08 1096.00 2279.04 1096.00 C2344.81 1096.00 2377.70 1066.00 2443.47 1066.00 C2511.43 1066.00 2545.41 1077.81 2613.37 1095.70 C2679.14 1113.01 2777.80 1154.00 2777.80 1154.00" transform="translate(0,17)" fill="none" stroke="#1f9a60" stroke-opacity="0.0056" stroke-width="21"/><path d="M771.80 1092.00 C771.80 1092.00 873.74 1081.80 941.71 1081.80 C1009.67 1081.80 1043.65 1081.80 1111.61 1082.00 C1177.38 1082.20 1210.27 1099.60 1276.04 1099.60 C1344.00 1099.60 1377.98 1046.40 1445.95 1046.40 C1511.72 1046.40 1544.60 1064.04 1610.37 1073.80 C1678.34 1083.88 1712.32 1096.00 1780.28 1096.00 C1848.24 1096.00 1882.23 1064.00 1950.19 1064.00 C2013.77 1064.00 2045.56 1081.81 2109.13 1088.00 C2177.10 1094.61 2211.08 1096.00 2279.04 1096.00 C2344.81 1096.00 2377.70 1066.00 2443.47 1066.00 C2511.43 1066.00 2545.41 1077.81 2613.37 1095.70 C2679.14 1113.01 2777.80 1154.00 2777.80 1154.00" transform="translate(0,17)" fill="none" stroke="#1f9a60" stroke-opacity="0.0113" stroke-width="19"/><path d="M771.80 1092.00 C771.80 1092.00 873.74 1081.80 941.71 1081.80 C1009.67 1081.80 1043.65 1081.80 1111.61 1082.00 C1177.38 1082.20 1210.27 1099.60 1276.04 1099.60 C1344.00 1099.60 1377.98 1046.40 1445.95 1046.40 C1511.72 1046.40 1544.60 1064.04 1610.37 1073.80 C1678.34 1083.88 1712.32 1096.00 1780.28 1096.00 C1848.24 1096.00 1882.23 1064.00 1950.19 1064.00 C2013.77 1064.00 2045.56 1081.81 2109.13 1088.00 C2177.10 1094.61 2211.08 1096.00 2279.04 1096.00 C2344.81 1096.00 2377.70 1066.00 2443.47 1066.00 C2511.43 1066.00 2545.41 1077.81 2613.37 1095.70 C2679.14 1113.01 2777.80 1154.00 2777.80 1154.00" transform="translate(0,17)" fill="none" stroke="#1f9a60" stroke-opacity="0.0169" stroke-width="17"/><path d="M771.80 1092.00 C771.80 1092.00 873.74 1081.80 941.71 1081.80 C1009.67 1081.80 1043.65 1081.80 1111.61 1082.00 C1177.38 1082.20 1210.27 1099.60 1276.04 1099.60 C1344.00 1099.60 1377.98 1046.40 1445.95 1046.40 C1511.72 1046.40 1544.60 1064.04 1610.37 1073.80 C1678.34 1083.88 1712.32 1096.00 1780.28 1096.00 C1848.24 1096.00 1882.23 1064.00 1950.19 1064.00 C2013.77 1064.00 2045.56 1081.81 2109.13 1088.00 C2177.10 1094.61 2211.08 1096.00 2279.04 1096.00 C2344.81 1096.00 2377.70 1066.00 2443.47 1066.00 C2511.43 1066.00 2545.41 1077.81 2613.37 1095.70 C2679.14 1113.01 2777.80 1154.00 2777.80 1154.00" transform="translate(0,17)" fill="none" stroke="#1f9a60" stroke-opacity="0.0225" stroke-width="15"/><path d="M771.80 1092.00 C771.80 1092.00 873.74 1081.80 941.71 1081.80 C1009.67 1081.80 1043.65 1081.80 1111.61 1082.00 C1177.38 1082.20 1210.27 1099.60 1276.04 1099.60 C1344.00 1099.60 1377.98 1046.40 1445.95 1046.40 C1511.72 1046.40 1544.60 1064.04 1610.37 1073.80 C1678.34 1083.88 1712.32 1096.00 1780.28 1096.00 C1848.24 1096.00 1882.23 1064.00 1950.19 1064.00 C2013.77 1064.00 2045.56 1081.81 2109.13 1088.00 C2177.10 1094.61 2211.08 1096.00 2279.04 1096.00 C2344.81 1096.00 2377.70 1066.00 2443.47 1066.00 C2511.43 1066.00 2545.41 1077.81 2613.37 1095.70 C2679.14 1113.01 2777.80 1154.00 2777.80 1154.00" transform="translate(0,17)" fill="none" stroke="#1f9a60" stroke-opacity="0.0282" stroke-width="13"/><path d="M771.80 1092.00 C771.80 1092.00 873.74 1081.80 941.71 1081.80 C1009.67 1081.80 1043.65 1081.80 1111.61 1082.00 C1177.38 1082.20 1210.27 1099.60 1276.04 1099.60 C1344.00 1099.60 1377.98 1046.40 1445.95 1046.40 C1511.72 1046.40 1544.60 1064.04 1610.37 1073.80 C1678.34 1083.88 1712.32 1096.00 1780.28 1096.00 C1848.24 1096.00 1882.23 1064.00 1950.19 1064.00 C2013.77 1064.00 2045.56 1081.81 2109.13 1088.00 C2177.10 1094.61 2211.08 1096.00 2279.04 1096.00 C2344.81 1096.00 2377.70 1066.00 2443.47 1066.00 C2511.43 1066.00 2545.41 1077.81 2613.37 1095.70 C2679.14 1113.01 2777.80 1154.00 2777.80 1154.00" transform="translate(0,17)" fill="none" stroke="#1f9a60" stroke-opacity="0.0338" stroke-width="11"/><path d="M771.80 1092.00 C771.80 1092.00 873.74 1081.80 941.71 1081.80 C1009.67 1081.80 1043.65 1081.80 1111.61 1082.00 C1177.38 1082.20 1210.27 1099.60 1276.04 1099.60 C1344.00 1099.60 1377.98 1046.40 1445.95 1046.40 C1511.72 1046.40 1544.60 1064.04 1610.37 1073.80 C1678.34 1083.88 1712.32 1096.00 1780.28 1096.00 C1848.24 1096.00 1882.23 1064.00 1950.19 1064.00 C2013.77 1064.00 2045.56 1081.81 2109.13 1088.00 C2177.10 1094.61 2211.08 1096.00 2279.04 1096.00 C2344.81 1096.00 2377.70 1066.00 2443.47 1066.00 C2511.43 1066.00 2545.41 1077.81 2613.37 1095.70 C2679.14 1113.01 2777.80 1154.00 2777.80 1154.00" transform="translate(0,17)" fill="none" stroke="#1f9a60" stroke-opacity="0.0395" stroke-width="9"/><path d="M771.80 1092.00 C771.80 1092.00 873.74 1081.80 941.71 1081.80 C1009.67 1081.80 1043.65 1081.80 1111.61 1082.00 C1177.38 1082.20 1210.27 1099.60 1276.04 1099.60 C1344.00 1099.60 1377.98 1046.40 1445.95 1046.40 C1511.72 1046.40 1544.60 1064.04 1610.37 1073.80 C1678.34 1083.88 1712.32 1096.00 1780.28 1096.00 C1848.24 1096.00 1882.23 1064.00 1950.19 1064.00 C2013.77 1064.00 2045.56 1081.81 2109.13 1088.00 C2177.10 1094.61 2211.08 1096.00 2279.04 1096.00 C2344.81 1096.00 2377.70 1066.00 2443.47 1066.00 C2511.43 1066.00 2545.41 1077.81 2613.37 1095.70 C2679.14 1113.01 2777.80 1154.00 2777.80 1154.00" transform="translate(0,17)" fill="none" stroke="#1f9a60" stroke-opacity="0.0451" stroke-width="7"/><path d="M771.80 1092.00 C771.80 1092.00 873.74 1081.80 941.71 1081.80 C1009.67 1081.80 1043.65 1081.80 1111.61 1082.00 C1177.38 1082.20 1210.27 1099.60 1276.04 1099.60 C1344.00 1099.60 1377.98 1046.40 1445.95 1046.40 C1511.72 1046.40 1544.60 1064.04 1610.37 1073.80 C1678.34 1083.88 1712.32 1096.00 1780.28 1096.00 C1848.24 1096.00 1882.23 1064.00 1950.19 1064.00 C2013.77 1064.00 2045.56 1081.81 2109.13 1088.00 C2177.10 1094.61 2211.08 1096.00 2279.04 1096.00 C2344.81 1096.00 2377.70 1066.00 2443.47 1066.00 C2511.43 1066.00 2545.41 1077.81 2613.37 1095.70 C2679.14 1113.01 2777.80 1154.00 2777.80 1154.00" transform="translate(0,17)" fill="none" stroke="#1f9a60" stroke-opacity="0.0507" stroke-width="5"/><path d="M771.80 1092.00 C771.80 1092.00 873.74 1081.80 941.71 1081.80 C1009.67 1081.80 1043.65 1081.80 1111.61 1082.00 C1177.38 1082.20 1210.27 1099.60 1276.04 1099.60 C1344.00 1099.60 1377.98 1046.40 1445.95 1046.40 C1511.72 1046.40 1544.60 1064.04 1610.37 1073.80 C1678.34 1083.88 1712.32 1096.00 1780.28 1096.00 C1848.24 1096.00 1882.23 1064.00 1950.19 1064.00 C2013.77 1064.00 2045.56 1081.81 2109.13 1088.00 C2177.10 1094.61 2211.08 1096.00 2279.04 1096.00 C2344.81 1096.00 2377.70 1066.00 2443.47 1066.00 C2511.43 1066.00 2545.41 1077.81 2613.37 1095.70 C2679.14 1113.01 2777.80 1154.00 2777.80 1154.00" transform="translate(0,17)" fill="none" stroke="#1f9a60" stroke-opacity="0.0564" stroke-width="3"/><path d="M771.80 1092.00 C771.80 1092.00 873.74 1081.80 941.71 1081.80 C1009.67 1081.80 1043.65 1081.80 1111.61 1082.00 C1177.38 1082.20 1210.27 1099.60 1276.04 1099.60 C1344.00 1099.60 1377.98 1046.40 1445.95 1046.40 C1511.72 1046.40 1544.60 1064.04 1610.37 1073.80 C1678.34 1083.88 1712.32 1096.00 1780.28 1096.00 C1848.24 1096.00 1882.23 1064.00 1950.19 1064.00 C2013.77 1064.00 2045.56 1081.81 2109.13 1088.00 C2177.10 1094.61 2211.08 1096.00 2279.04 1096.00 C2344.81 1096.00 2377.70 1066.00 2443.47 1066.00 C2511.43 1066.00 2545.41 1077.81 2613.37 1095.70 C2679.14 1113.01 2777.80 1154.00 2777.80 1154.00" transform="translate(0,17)" fill="none" stroke="#1f9a60" stroke-opacity="0.0620" stroke-width="1"/>
<rect x="752" y="1275.35" width="2048" height="2.5" fill="#cdd6ec"/>
<rect x="770.80" y="1276.6" width="2" height="19" fill="#cdd6ec"/><rect x="940.71" y="1276.6" width="2" height="19" fill="#cdd6ec"/><rect x="1110.61" y="1276.6" width="2" height="19" fill="#cdd6ec"/><rect x="1275.04" y="1276.6" width="2" height="19" fill="#cdd6ec"/><rect x="1444.95" y="1276.6" width="2" height="19" fill="#cdd6ec"/><rect x="1609.37" y="1276.6" width="2" height="19" fill="#cdd6ec"/><rect x="1779.28" y="1276.6" width="2" height="19" fill="#cdd6ec"/><rect x="1949.19" y="1276.6" width="2" height="19" fill="#cdd6ec"/><rect x="2108.13" y="1276.6" width="2" height="19" fill="#cdd6ec"/><rect x="2278.04" y="1276.6" width="2" height="19" fill="#cdd6ec"/><rect x="2442.47" y="1276.6" width="2" height="19" fill="#cdd6ec"/><rect x="2612.37" y="1276.6" width="2" height="19" fill="#cdd6ec"/><rect x="2776.80" y="1276.6" width="2" height="19" fill="#cdd6ec"/>
<path d="M771.80 1092.00 C771.80 1092.00 873.74 1081.80 941.71 1081.80 C1009.67 1081.80 1043.65 1081.80 1111.61 1082.00 C1177.38 1082.20 1210.27 1099.60 1276.04 1099.60 C1344.00 1099.60 1377.98 1046.40 1445.95 1046.40 C1511.72 1046.40 1544.60 1064.04 1610.37 1073.80 C1678.34 1083.88 1712.32 1096.00 1780.28 1096.00 C1848.24 1096.00 1882.23 1064.00 1950.19 1064.00 C2013.77 1064.00 2045.56 1081.81 2109.13 1088.00 C2177.10 1094.61 2211.08 1096.00 2279.04 1096.00 C2344.81 1096.00 2377.70 1066.00 2443.47 1066.00 C2511.43 1066.00 2545.41 1077.81 2613.37 1095.70 C2679.14 1113.01 2777.80 1154.00 2777.80 1154.00" fill="none" stroke="#37b07a" stroke-width="3.8"/>
<circle cx="771.80" cy="1092.00" r="10" fill="#f1f1f6"/><circle cx="771.80" cy="1092.00" r="6.3" fill="#37ad78"/><circle cx="941.71" cy="1081.80" r="10" fill="#f1f1f6"/><circle cx="941.71" cy="1081.80" r="6.3" fill="#37ad78"/><circle cx="1111.61" cy="1082.00" r="10" fill="#f1f1f6"/><circle cx="1111.61" cy="1082.00" r="6.3" fill="#37ad78"/><circle cx="1276.04" cy="1099.60" r="10" fill="#f1f1f6"/><circle cx="1276.04" cy="1099.60" r="6.3" fill="#37ad78"/><circle cx="1445.95" cy="1046.40" r="10" fill="#f1f1f6"/><circle cx="1445.95" cy="1046.40" r="6.3" fill="#37ad78"/><circle cx="1610.37" cy="1073.80" r="10" fill="#f1f1f6"/><circle cx="1610.37" cy="1073.80" r="6.3" fill="#37ad78"/><circle cx="1780.28" cy="1096.00" r="10" fill="#f1f1f6"/><circle cx="1780.28" cy="1096.00" r="6.3" fill="#37ad78"/><circle cx="1950.19" cy="1064.00" r="10" fill="#f1f1f6"/><circle cx="1950.19" cy="1064.00" r="6.3" fill="#37ad78"/><circle cx="2109.13" cy="1088.00" r="10" fill="#f1f1f6"/><circle cx="2109.13" cy="1088.00" r="6.3" fill="#37ad78"/><circle cx="2279.04" cy="1096.00" r="10" fill="#f1f1f6"/><circle cx="2279.04" cy="1096.00" r="6.3" fill="#37ad78"/><circle cx="2443.47" cy="1066.00" r="10" fill="#f1f1f6"/><circle cx="2443.47" cy="1066.00" r="6.3" fill="#37ad78"/><circle cx="2613.37" cy="1095.70" r="10" fill="#f1f1f6"/><circle cx="2613.37" cy="1095.70" r="6.3" fill="#37ad78"/><circle cx="2777.80" cy="1154.00" r="10" fill="#f1f1f6"/><circle cx="2777.80" cy="1154.00" r="6.3" fill="#37ad78"/></svg>
<div class="t" style="left:663.95px;top:960.17px;font-size:24.13px;color:#5a7484;transform:scaleX(1.0897);-webkit-text-stroke:0.39px #5a7484;">300k</div>
<div class="t" style="left:663.68px;top:1061.97px;font-size:24.13px;color:#5a7484;transform:scaleX(1.0948);-webkit-text-stroke:0.39px #5a7484;">200k</div>
<div class="t" style="left:666.10px;top:1163.57px;font-size:24.13px;color:#5a7484;transform:scaleX(1.0485);-webkit-text-stroke:0.39px #5a7484;">100k</div>
<div style="position:absolute;left:925.2071038251365px;top:1259.5px;width:32px;height:30px;background:#fff;"></div>
<svg style="position:absolute;left:928.2071038251365px;top:1262px;overflow:visible;" width="27" height="27" viewBox="0 0 48 48"><path fill="#EA4335" d="M24 9.5c3.54 0 6.71 1.22 9.21 3.6l6.85-6.85C35.9 2.38 30.47 0 24 0 14.62 0 6.51 5.38 2.56 13.22l7.98 6.19C12.43 13.72 17.74 9.5 24 9.5z"/><path fill="#4285F4" d="M46.98 24.55c0-1.57-.15-3.09-.38-4.55H24v9.02h12.94c-.58 2.96-2.26 5.48-4.78 7.18l7.73 6c4.51-4.18 7.09-10.36 7.09-17.65z"/><path fill="#FBBC05" d="M10.53 28.59c-.48-1.45-.76-2.99-.76-4.59s.27-3.14.76-4.59l-7.98-6.19C.92 16.46 0 20.12 0 24c0 3.88.92 7.54 2.56 10.78l7.970-6.19z"/><path fill="#34A853" d="M24 48c6.48 0 11.930-2.130 15.890-5.810l-7.730-6c-2.150 1.450-4.920 2.300-8.160 2.300-6.260 0-11.570-4.220-13.470-9.910l-7.980 6.190C6.510 42.620 14.620 48 24 48z"/></svg>
<div style="position:absolute;left:1095.1142076502733px;top:1259.5px;width:32px;height:30px;background:#fff;"></div>
<svg style="position:absolute;left:1098.1142076502733px;top:1262px;overflow:visible;" width="27" height="27" viewBox="0 0 48 48"><path fill="#EA4335" d="M24 9.5c3.54 0 6.71 1.22 9.21 3.6l6.85-6.85C35.9 2.38 30.47 0 24 0 14.62 0 6.51 5.38 2.56 13.22l7.98 6.19C12.43 13.72 17.74 9.5 24 9.5z"/><path fill="#4285F4" d="M46.98 24.55c0-1.57-.15-3.09-.38-4.55H24v9.02h12.94c-.58 2.96-2.26 5.48-4.78 7.18l7.73 6c4.51-4.18 7.09-10.36 7.09-17.65z"/><path fill="#FBBC05" d="M10.53 28.59c-.48-1.45-.76-2.99-.76-4.59s.27-3.14.76-4.59l-7.98-6.19C.92 16.46 0 20.12 0 24c0 3.88.92 7.54 2.56 10.78l7.970-6.19z"/><path fill="#34A853" d="M24 48c6.48 0 11.930-2.130 15.890-5.810l-7.730-6c-2.150 1.450-4.920 2.300-8.160 2.300-6.260 0-11.570-4.220-13.470-9.910l-7.980 6.190C6.510 42.620 14.620 48 24 48z"/></svg>
<div style="position:absolute;left:1259.54043715847px;top:1259.5px;width:32px;height:30px;background:#fff;"></div>
<svg style="position:absolute;left:1262.54043715847px;top:1262px;overflow:visible;" width="27" height="27" viewBox="0 0 48 48"><path fill="#EA4335" d="M24 9.5c3.54 0 6.71 1.22 9.21 3.6l6.85-6.85C35.9 2.38 30.47 0 24 0 14.62 0 6.51 5.38 2.56 13.22l7.98 6.19C12.43 13.72 17.74 9.5 24 9.5z"/><path fill="#4285F4" d="M46.98 24.55c0-1.57-.15-3.09-.38-4.55H24v9.02h12.94c-.58 2.96-2.26 5.48-4.78 7.18l7.73 6c4.51-4.18 7.09-10.36 7.09-17.65z"/><path fill="#FBBC05" d="M10.53 28.59c-.48-1.45-.76-2.99-.76-4.59s.27-3.14.76-4.59l-7.98-6.19C.92 16.46 0 20.12 0 24c0 3.88.92 7.54 2.56 10.78l7.970-6.19z"/><path fill="#34A853" d="M24 48c6.48 0 11.930-2.130 15.890-5.810l-7.730-6c-2.150 1.450-4.920 2.300-8.160 2.300-6.260 0-11.570-4.220-13.470-9.910l-7.980 6.190C6.510 42.620 14.620 48 24 48z"/></svg>
<div style="position:absolute;left:1429.4475409836066px;top:1259.5px;width:32px;height:30px;background:#fff;"></div>
<svg style="position:absolute;left:1432.4475409836066px;top:1262px;overflow:visible;" width="27" height="27" viewBox="0 0 48 48"><path fill="#EA4335" d="M24 9.5c3.54 0 6.71 1.22 9.21 3.6l6.85-6.85C35.9 2.38 30.47 0 24 0 14.62 0 6.51 5.38 2.56 13.22l7.98 6.19C12.43 13.72 17.74 9.5 24 9.5z"/><path fill="#4285F4" d="M46.98 24.55c0-1.57-.15-3.09-.38-4.55H24v9.02h12.94c-.58 2.96-2.26 5.48-4.78 7.18l7.73 6c4.51-4.18 7.09-10.36 7.09-17.65z"/><path fill="#FBBC05" d="M10.53 28.59c-.48-1.45-.76-2.99-.76-4.59s.27-3.14.76-4.59l-7.98-6.19C.92 16.46 0 20.12 0 24c0 3.88.92 7.54 2.56 10.78l7.970-6.19z"/><path fill="#34A853" d="M24 48c6.48 0 11.930-2.130 15.890-5.810l-7.730-6c-2.150 1.450-4.920 2.300-8.160 2.300-6.260 0-11.570-4.220-13.470-9.910l-7.980 6.190C6.510 42.620 14.620 48 24 48z"/></svg>
<div style="position:absolute;left:2092.633333333333px;top:1259.5px;width:32px;height:30px;background:#fff;"></div>
<svg style="position:absolute;left:2095.633333333333px;top:1262px;overflow:visible;" width="27" height="27" viewBox="0 0 48 48"><path fill="#EA4335" d="M24 9.5c3.54 0 6.71 1.22 9.21 3.6l6.85-6.85C35.9 2.38 30.47 0 24 0 14.62 0 6.51 5.38 2.56 13.22l7.98 6.19C12.43 13.72 17.74 9.5 24 9.5z"/><path fill="#4285F4" d="M46.98 24.55c0-1.57-.15-3.09-.38-4.55H24v9.02h12.94c-.58 2.96-2.26 5.48-4.78 7.18l7.73 6c4.51-4.18 7.09-10.36 7.09-17.65z"/><path fill="#FBBC05" d="M10.53 28.59c-.48-1.45-.76-2.99-.76-4.59s.27-3.14.76-4.59l-7.98-6.19C.92 16.46 0 20.12 0 24c0 3.88.92 7.54 2.56 10.78l7.970-6.19z"/><path fill="#34A853" d="M24 48c6.48 0 11.930-2.130 15.890-5.810l-7.730-6c-2.150 1.450-4.920 2.300-8.160 2.300-6.260 0-11.570-4.220-13.470-9.910l-7.980 6.190C6.510 42.620 14.620 48 24 48z"/></svg>
<div style="position:absolute;left:2426.9666666666667px;top:1259.5px;width:32px;height:30px;background:#fff;"></div>
<svg style="position:absolute;left:2429.9666666666667px;top:1262px;overflow:visible;" width="27" height="27" viewBox="0 0 48 48"><path fill="#EA4335" d="M24 9.5c3.54 0 6.71 1.22 9.21 3.6l6.85-6.85C35.9 2.38 30.47 0 24 0 14.62 0 6.51 5.38 2.56 13.22l7.98 6.19C12.43 13.72 17.74 9.5 24 9.5z"/><path fill="#4285F4" d="M46.98 24.55c0-1.57-.15-3.09-.38-4.55H24v9.02h12.94c-.58 2.96-2.26 5.48-4.78 7.18l7.73 6c4.51-4.18 7.09-10.36 7.09-17.65z"/><path fill="#FBBC05" d="M10.53 28.59c-.48-1.45-.76-2.99-.76-4.59s.27-3.14.76-4.59l-7.98-6.19C.92 16.46 0 20.12 0 24c0 3.88.92 7.54 2.56 10.78l7.970-6.19z"/><path fill="#34A853" d="M24 48c6.48 0 11.930-2.130 15.890-5.810l-7.730-6c-2.150 1.450-4.920 2.300-8.160 2.300-6.260 0-11.570-4.220-13.470-9.910l-7.980 6.190C6.510 42.620 14.620 48 24 48z"/></svg>
<div class="t" style="left:729.26px;top:1296.08px;font-size:24.71px;color:#5a7484;transform:scaleX(0.9213);-webkit-text-stroke:0.40px #5a7484;">Jul 2023</div>
<div class="t" style="left:891.60px;top:1296.08px;font-size:24.71px;color:#5a7484;transform:scaleX(0.9621);-webkit-text-stroke:0.40px #5a7484;">Aug 2023</div>
<div class="t" style="left:1061.44px;top:1296.08px;font-size:24.71px;color:#5a7484;transform:scaleX(0.9570);-webkit-text-stroke:0.40px #5a7484;">Sep 2023</div>
<div class="t" style="left:1225.88px;top:1296.08px;font-size:24.71px;color:#5a7484;transform:scaleX(1.0092);-webkit-text-stroke:0.40px #5a7484;">Oct 2023</div>
<div class="t" style="left:1394.04px;top:1296.08px;font-size:24.71px;color:#5a7484;transform:scaleX(0.9904);-webkit-text-stroke:0.40px #5a7484;">Nov 2023</div>
<div class="t" style="left:1559.06px;top:1296.08px;font-size:24.71px;color:#5a7484;transform:scaleX(0.9797);-webkit-text-stroke:0.40px #5a7484;">Dec 2023</div>
<div class="t" style="left:1734.66px;top:1296.08px;font-size:24.71px;color:#5a7484;transform:scaleX(0.9218);-webkit-text-stroke:0.40px #5a7484;">Jan 2024</div>
<div class="t" style="left:1900.50px;top:1296.08px;font-size:24.71px;color:#5a7484;transform:scaleX(0.9599);-webkit-text-stroke:0.40px #5a7484;">Feb 2024</div>
<div class="t" style="left:2056.69px;top:1296.08px;font-size:24.71px;color:#5a7484;transform:scaleX(1.0159);-webkit-text-stroke:0.40px #5a7484;">Mar 2024</div>
<div class="t" style="left:2231.00px;top:1296.08px;font-size:24.71px;color:#5a7484;transform:scaleX(0.9942);-webkit-text-stroke:0.40px #5a7484;">Apr 2024</div>
<div class="t" style="left:2390.51px;top:1296.08px;font-size:24.71px;color:#5a7484;transform:scaleX(1.0042);-webkit-text-stroke:0.40px #5a7484;">May 2024</div>
<div class="t" style="left:2568.36px;top:1296.08px;font-size:24.71px;color:#5a7484;transform:scaleX(0.9267);-webkit-text-stroke:0.40px #5a7484;">Jun 2024</div>
<div class="t" style="left:2713.15px;top:1296.08px;font-size:24.71px;color:#5a7484;transform:scaleX(0.9373);-webkit-text-stroke:0.40px #5a7484;">Jul 2024</div>
<div style="position:absolute;left:2712px;top:1168px;width:120px;height:120px;background:#1a75d5;border-radius:50%;box-shadow:0 4px 16px rgba(20,40,80,0.22);"></div>
<svg style="position:absolute;left:2710px;top:1165px;overflow:visible;" width="125" height="125" viewBox="0 0 125 125"><path d="M40 42 Q32 42 32.5 51 V74 Q32.5 83 41 83 H51.5 L57.5 92 L63.5 83 H75 Q83.5 83 83.5 74 V51 Q83.5 42 75 42 Z" fill="#fff"/><path d="M43 37.5 Q46 33 56 33 H84 Q92 34 92 43 V64 Q92 71 88 72 V50 Q88 39 79 38 H50 Q45 37.5 43 37.5 Z" fill="#fff"/></svg>
<div style="position:absolute;left:588px;top:1318px;width:2252px;height:78px;background:linear-gradient(rgba(0,0,0,0),rgba(0,0,0,0.025) 35%,rgba(0,0,0,0.13));-webkit-mask-image:linear-gradient(to right,#000 0%,#000 80%,transparent 96%);mask-image:linear-gradient(to right,#000 0%,#000 80%,transparent 96%);"></div>
<div style="position:absolute;left:2750px;top:1342px;width:60px;height:52px;box-sizing:border-box;border:4px solid #d9d9e5;border-radius:9px;background:#fff;"></div>
<svg style="position:absolute;left:2770px;top:1355px;overflow:visible;" width="20" height="24" viewBox="0 0 20 24"><path d="M10 0.5 L19.5 10 H14 V17 H6 V10 H0.5 Z" fill="#262e58"/><rect x="0.5" y="20.5" width="19" height="3" fill="#262e58"/></svg>
<svg style="position:absolute;left:0px;top:1378px;overflow:visible;" width="18" height="18" viewBox="0 0 18 18"><path d="M0 0 A18 18 0 0 0 18 18 H0 Z" fill="#221d14"/></svg>
<svg style="position:absolute;left:2860px;top:1378px;overflow:visible;" width="18" height="18" viewBox="0 0 18 18"><path d="M18 0 A18 18 0 0 1 0 18 H18 Z" fill="#221d14"/></svg>
</body></html>
